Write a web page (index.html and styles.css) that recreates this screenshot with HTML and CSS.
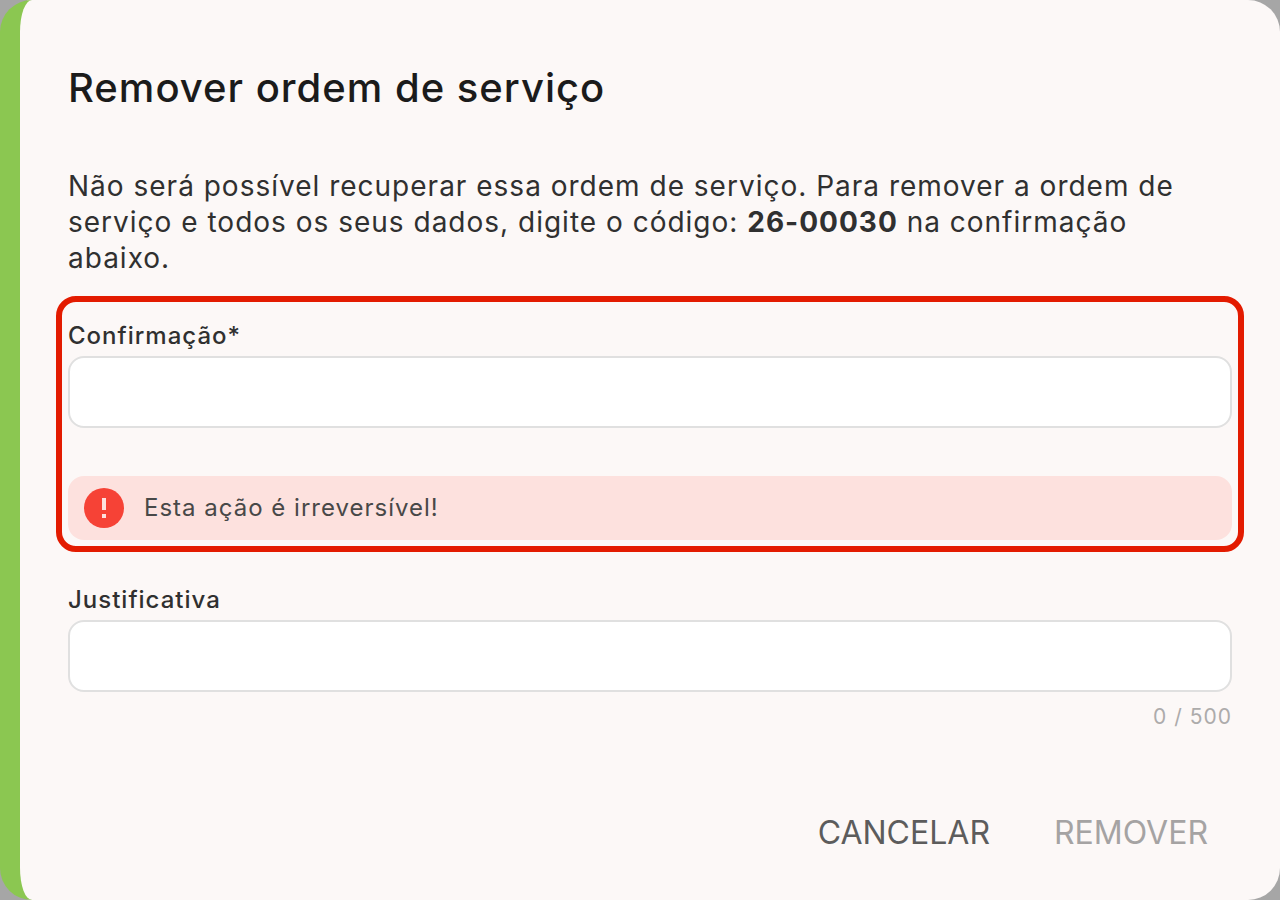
FILE: index.html
```
<!DOCTYPE html>
<html lang="pt-BR">
    <head>
        <meta charset="UTF-8" />
        <title>Remover ordem de serviço</title>
        <link rel="stylesheet" href="styles.css">
    </head>
    <body>
        <form class="dialog" role="dialog" aria-labelledby="dialog-title">
            <h1 class="dialog-title" id="dialog-title">Remover ordem de serviço</h1>

            <p class="dialog-text">
                Não será possível recuperar essa ordem de serviço. Para remover
                a ordem de serviço e todos os seus dados, digite o código:
                <strong>26-00030</strong> na confirmação abaixo.
            </p>

            <div class="highlight">
                <label for="confirmation">Confirmação*</label>
                <input type="text" id="confirmation" name="confirmation" required />

                <div class="alert" role="alert">
                    <svg class="alert-icon" viewBox="0 0 40 40" aria-hidden="true">
                        <circle cx="20" cy="20" r="20" fill="#f64236" />
                        <path d="M18 10h4v12h-4zM18 26h4v4h-4z" fill="#fde1de" />
                    </svg>
                    <span>Esta ação é irreversível!</span>
                </div>
            </div>

            <label for="justification">Justificativa</label>
            <input type="text" id="justification" name="justification" maxlength="500" />
            <div class="counter">0 / 500</div>

            <div class="dialog-footer">
                <button type="button" class="btn">CANCELAR</button>
                <button type="submit" class="btn" disabled>REMOVER</button>
            </div>
        </form>
    </body>
</html>
```
FILE: styles.css
```
* {
    box-sizing: border-box;
}

body {
    margin: 0;
    font-family: Inter, "Liberation Sans", sans-serif;
    font-size: 24px;
    line-height: 32px;
    letter-spacing: 1px;
    color: #303030;
    background-color: #a6a6a6;
}

.dialog {
    min-height: 100vh;
    padding: 64px 48px 32px;
    border-left: 20px solid #8bc751;
    border-radius: 32px;
    background-color: #fcf8f7;
}

.dialog-title {
    margin: 0 0 56px;
    font-size: 40px;
    line-height: 48px;
    font-weight: 500;
    color: #1b1b1b;
}

.dialog-text {
    margin: 0 0 20px;
    font-size: 28px;
    line-height: 36px;
}

.dialog-text strong {
    font-weight: 700;
}

.highlight {
    margin: 0 -12px 32px;
    padding: 18px 6px 6px;
    border: 6px solid #e31b00;
    border-radius: 20px;
}

label {
    display: block;
    margin-bottom: 4px;
    font-weight: 500;
}

input[type="text"] {
    display: block;
    width: 100%;
    height: 72px;
    padding: 0 24px;
    border: 2px solid #e0e0e0;
    border-radius: 16px;
    background-color: #fff;
    font-family: inherit;
    font-size: 28px;
}

.alert {
    display: flex;
    align-items: center;
    gap: 20px;
    margin-top: 48px;
    padding: 12px 16px;
    border-radius: 16px;
    background-color: #fde1de;
    color: #484848;
}

.alert-icon {
    width: 40px;
    height: 40px;
}

.counter {
    margin-top: 12px;
    font-size: 21px;
    line-height: 25px;
    text-align: right;
    color: #adabab;
}

.dialog-footer {
    display: flex;
    justify-content: flex-end;
    gap: 16px;
    margin-top: 72px;
}

.btn {
    padding: 12px 24px;
    border: none;
    background: none;
    font-family: inherit;
    font-size: 32px;
    line-height: 40px;
    color: #5c5c5c;
    cursor: pointer;
}

.btn:disabled {
    color: #a5a3a3;
    cursor: default;
}
```
